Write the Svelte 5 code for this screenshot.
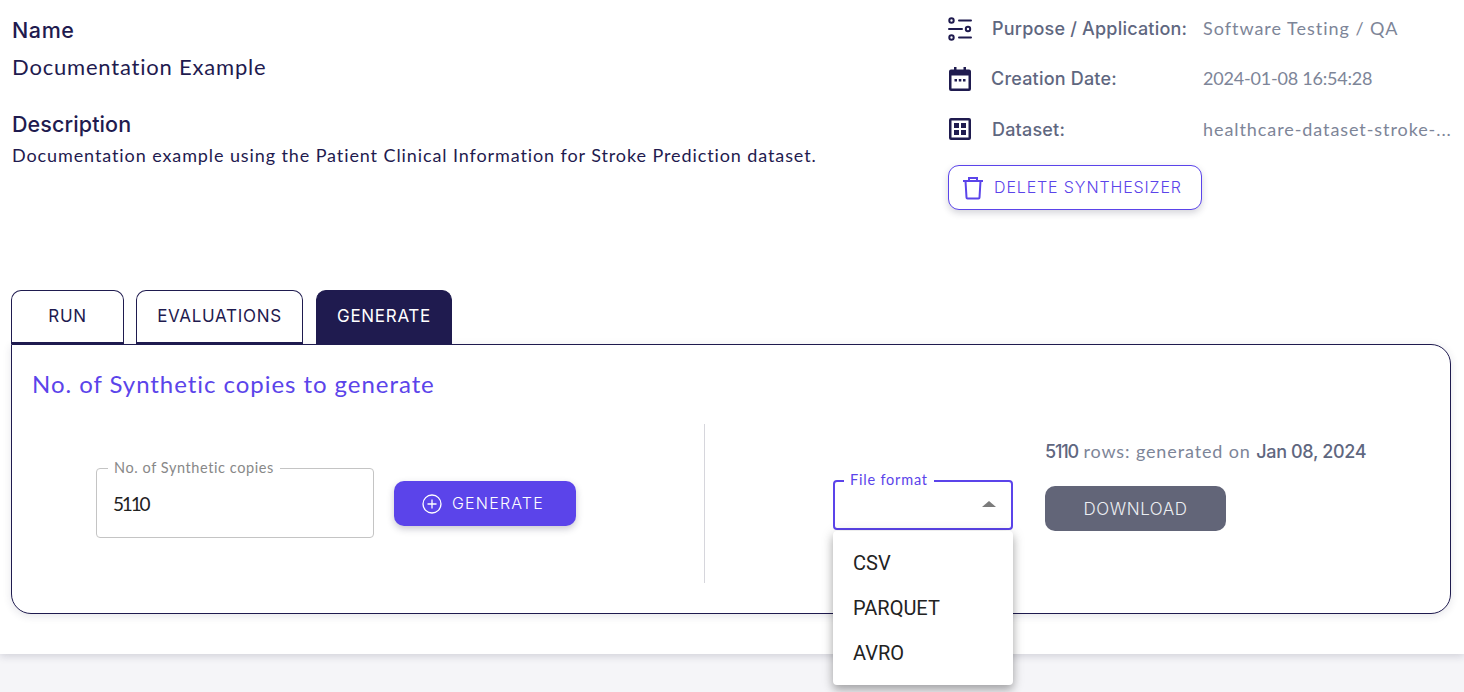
<script>
  const formats = ['CSV', 'PARQUET', 'AVRO'];
  const tabs = [
    { label: 'RUN', cls: 'run' },
    { label: 'EVALUATIONS', cls: 'evals' },
    { label: 'GENERATE', cls: 'gen active' }
  ];
</script>

<div class="page">
  <div class="card">
    <header class="top">
      <section class="info">
        <h3 class="name-h">Name</h3>
        <p class="name-v">Documentation Example</p>
        <h3 class="desc-h">Description</h3>
        <p class="desc-v">Documentation example using the Patient Clinical Information for Stroke Prediction dataset.</p>
      </section>
      <aside class="meta">
        <div class="row">
          <svg class="ico" viewBox="0 0 24 24" fill="none" stroke="#1f1b4f" stroke-width="2" stroke-linecap="round"><circle cx="3.500" cy="3.500" r="2.200"/><path d="M11 3.500h12"/><path d="M1 12h13"/><circle cx="20" cy="12" r="2.200"/><circle cx="3.500" cy="20.500" r="2.200"/><path d="M11 20.500h12"/></svg>
          <span class="lab">Purpose / Application:</span><span class="val">Software Testing / QA</span>
        </div>
        <div class="row">
          <svg class="ico" viewBox="0 0 24 24" fill="#1f1b4f"><path fill-rule="evenodd" d="M6 0h2.500v2.500h7V0H18v2.500h3a2 2 0 0 1 2 2V22a2 2 0 0 1-2 2H3a2 2 0 0 1-2-2V4.500a2 2 0 0 1 2-2h3zM3.500 8.500V21.500h17V8.500z"/><rect x="6.500" y="12" width="2.500" height="2.500"/><rect x="10.800" y="12" width="2.500" height="2.500"/><rect x="15" y="12" width="2.500" height="2.500"/></svg>
          <span class="lab date">Creation Date:</span><span class="val stamp">2024-01-08 16:54:28</span>
        </div>
        <div class="row">
          <svg class="ico" viewBox="0 0 24 24" fill="#1f1b4f"><path fill-rule="evenodd" d="M3 1h18a2 2 0 0 1 2 2v18a2 2 0 0 1-2 2H3a2 2 0 0 1-2-2V3a2 2 0 0 1 2-2zM3.500 3.500v17h17v-17z"/><rect x="6" y="6" width="5" height="5"/><rect x="13" y="6" width="5" height="5"/><rect x="6" y="13" width="5" height="5"/><rect x="13" y="13" width="5" height="5"/></svg>
          <span class="lab tight">Dataset:</span><span class="val data">healthcare-dataset-stroke-...</span>
        </div>
        <button class="delete">
          <svg width="22" height="24" viewBox="0 0 22 24" fill="none" stroke="#5b44ea" stroke-width="2"><path d="M1 5h20"/><path d="M7 5V2h8v3"/><path d="M3.500 5l1 16.500a1 1 0 0 0 1 1h11a1 1 0 0 0 1-1L18.500 5"/></svg>
          <span class="btn-text">DELETE SYNTHESIZER</span>
        </button>
      </aside>
    </header>

    <nav class="tabs">
      {#each tabs as t}
        <button class={'tab ' + t.cls}><span class="btn-text">{t.label}</span></button>
      {/each}
    </nav>

    <main class="panel">
      <h2 class="title">No. of Synthetic copies to generate</h2>
      <div class="cols">
        <div class="col left">
          <fieldset class="field">
            <legend>No. of Synthetic copies</legend>
            <span class="num">5110</span>
          </fieldset>
          <button class="generate">
            <svg width="22" height="22" viewBox="0 0 22 22" fill="none" stroke="#fff" stroke-width="1.300"><circle cx="11" cy="11" r="9"/><path d="M11 6.500v9M6.500 11h9"/></svg>
            <span class="btn-text">GENERATE</span>
          </button>
        </div>
        <div class="col right">
          <div class="select-wrap">
            <fieldset class="select">
              <legend>File format</legend>
              <span class="caret"></span>
            </fieldset>
            <ul class="menu">
              {#each formats as f}<li>{f}</li>{/each}
            </ul>
          </div>
          <div class="result">
            <p class="status"><b class="count">5110</b> rows: generated on <b>Jan 08, 2024</b></p>
            <button class="download">DOWNLOAD</button>
          </div>
        </div>
      </div>
    </main>
  </div>
  <div class="foot"></div>
</div>

<style>
  :global(body) { margin: 0; background: #f5f5f8; }
  .page { height: 692px; overflow: hidden; font-family: Lato, "Noto Sans", sans-serif; font-weight: 300; color: #1f1b4f; }
  .card { height: 654px; background: #fff; box-shadow: 0 2px 8px rgba(40, 40, 70, .18); padding: 0 13px 0 11px; box-sizing: border-box; position: relative; }
  .top { display: flex; height: 290px; }
  .info { width: 937px; flex: none; padding-left: 1px; box-sizing: border-box; }
  h3, p, h2 { margin: 0; }
  .name-h, .desc-h { font-family: Inter, sans-serif; font-size: 21.500px; font-weight: 500; line-height: 28px; letter-spacing: .1px; }
  .name-h { padding-top: 16px; letter-spacing: .6px; }
  .name-v { font-size: 22px; line-height: 28px; margin-top: 9px; letter-spacing: .8px; font-weight: 400; }
  .desc-h { margin-top: 29px; }
  .desc-v { font-size: 18px; line-height: 24px; margin-top: 5px; letter-spacing: .9px; font-weight: 400; }
  .meta { flex: 1; min-width: 0; padding-top: 4px; position: relative; }
  .row { display: flex; align-items: center; height: 50px; font-size: 18px; }
  .ico { width: 24px; height: 24px; flex: none; margin-right: 20px; }
  .lab { width: 211px; font-family: Inter, sans-serif; font-weight: 500; color: #5f6780; flex: none; padding-bottom: 2px; letter-spacing: .2px; }
  .lab.date { margin-left: -1px; width: 212px; }
  .lab.tight { padding-bottom: 0; }
  .val { color: #7d8598; letter-spacing: .98px; white-space: nowrap; font-size: 18px; font-weight: 400; padding-bottom: 2px; }
  .val.stamp { letter-spacing: -.2px; }
  .val.data { letter-spacing: .92px; padding-bottom: 0; }
  button { font-family: Inter, sans-serif; cursor: pointer; }
  .btn-text { display: block; padding-bottom: 2px; }
  .delete { display: flex; align-items: center; gap: 10px; width: 254px; height: 45px; margin-top: 11px; padding: 0 0 0 13px; background: #fff; border: 1px solid #5b44ea; border-radius: 11px; color: #5b44ea; font-size: 16px; font-weight: 300; letter-spacing: .87px; box-shadow: 0 3px 7px rgba(40, 40, 70, .2); box-sizing: border-box; }
  .tabs { display: flex; height: 54px; }
  .tab { height: 54px; background: #fff; border: 1px solid #1f1b4f; border-bottom-width: 2px; border-radius: 10px 10px 0 0; color: #1f1b4f; font-size: 17px; letter-spacing: .7px; padding: 0; box-sizing: border-box; }
  .run { width: 113px; margin-right: 12px; }
  .evals { width: 167px; margin-right: 13px; }
  .gen { width: 136px; }
  .active { background: #1f1b4f; color: #fff; }
  .panel { height: 270px; border: 1px solid #1f1b4f; border-radius: 0 20px 20px 20px; box-sizing: border-box; padding: 23px 0 0 20px; box-shadow: 0 2px 8px rgba(40,40,70,.12); background: #fff; }
  .title { font-size: 24px; font-weight: 400; color: #5b44ea; line-height: 32px; letter-spacing: .95px; }
  .cols { display: flex; margin-top: 24px; height: 159px; margin-left: 1px; }
  .col { display: flex; box-sizing: border-box; }
  .left { width: 672px; border-right: 1px solid #d6d6dc; padding: 35px 0 0 63px; gap: 20px; }
  .field { width: 278px; height: 79px; margin: 0; padding: 0 0 0 11px; border: 1px solid #c4c4c4; border-radius: 4px; box-sizing: border-box; }
  .field legend { font-size: 14.500px; font-weight: 400; color: #888; padding: 0 6px; line-height: 18px; letter-spacing: .58px; }
  .num { display: block; font-size: 19px; font-weight: 400; color: #222; padding: 15px 0 0 5px; letter-spacing: -2.200px; }
  .generate { display: flex; align-items: center; gap: 9px; width: 182px; height: 45px; margin-top: 22px; padding: 0 0 0 27px; border: 0; border-radius: 10px; background: #5b44ea; color: #fff; font-size: 16px; font-weight: 300; letter-spacing: 1.200px; box-shadow: 0 3px 7px rgba(40, 40, 70, .25); box-sizing: border-box; }
  .right { padding-left: 128px; gap: 32px; flex: 1; }
  .select-wrap { position: relative; width: 180px; padding-top: 48px; }
  .select { height: 58px; margin: 0; padding: 0 0 0 9px; border: 2px solid #5b44ea; border-radius: 4px; box-sizing: border-box; position: relative; }
  .select legend { font-size: 14.500px; font-weight: 400; color: #5b44ea; padding: 0 6px 2px; line-height: 16px; letter-spacing: .8px; }
  .caret { position: absolute; right: 15px; top: 11px; border-style: solid; border-color: transparent; border-width: 0 7px 6px; border-bottom-color: #7b7b7b; }
  .menu { position: absolute; left: 0; top: 107px; width: 180px; height: 154px; margin: 0; padding: 10px 0; list-style: none; background: #fff; border-radius: 4px; box-sizing: border-box; box-shadow: 0 5px 8px rgba(0,0,0,.25), 0 2px 14px rgba(0,0,0,.14); z-index: 5; }
  .menu li { height: 45px; padding-left: 20px; font: 400 20px/45px Roboto, sans-serif; color: #222; }
  .status { font-size: 18px; font-weight: 400; color: #7d8598; line-height: 24px; margin-top: 15px; white-space: nowrap; letter-spacing: .88px; }
  .status b { font-family: Inter, sans-serif; font-weight: 500; color: #5f6780; letter-spacing: -.35px; }
  .status b.count { letter-spacing: -1.200px; }
  .download { display: block; width: 181px; height: 45px; margin-top: 22px; border: 0; border-radius: 10px; background: #626578; color: #eceef2; font-size: 17px; font-weight: 300; letter-spacing: .55px; }
</style>
